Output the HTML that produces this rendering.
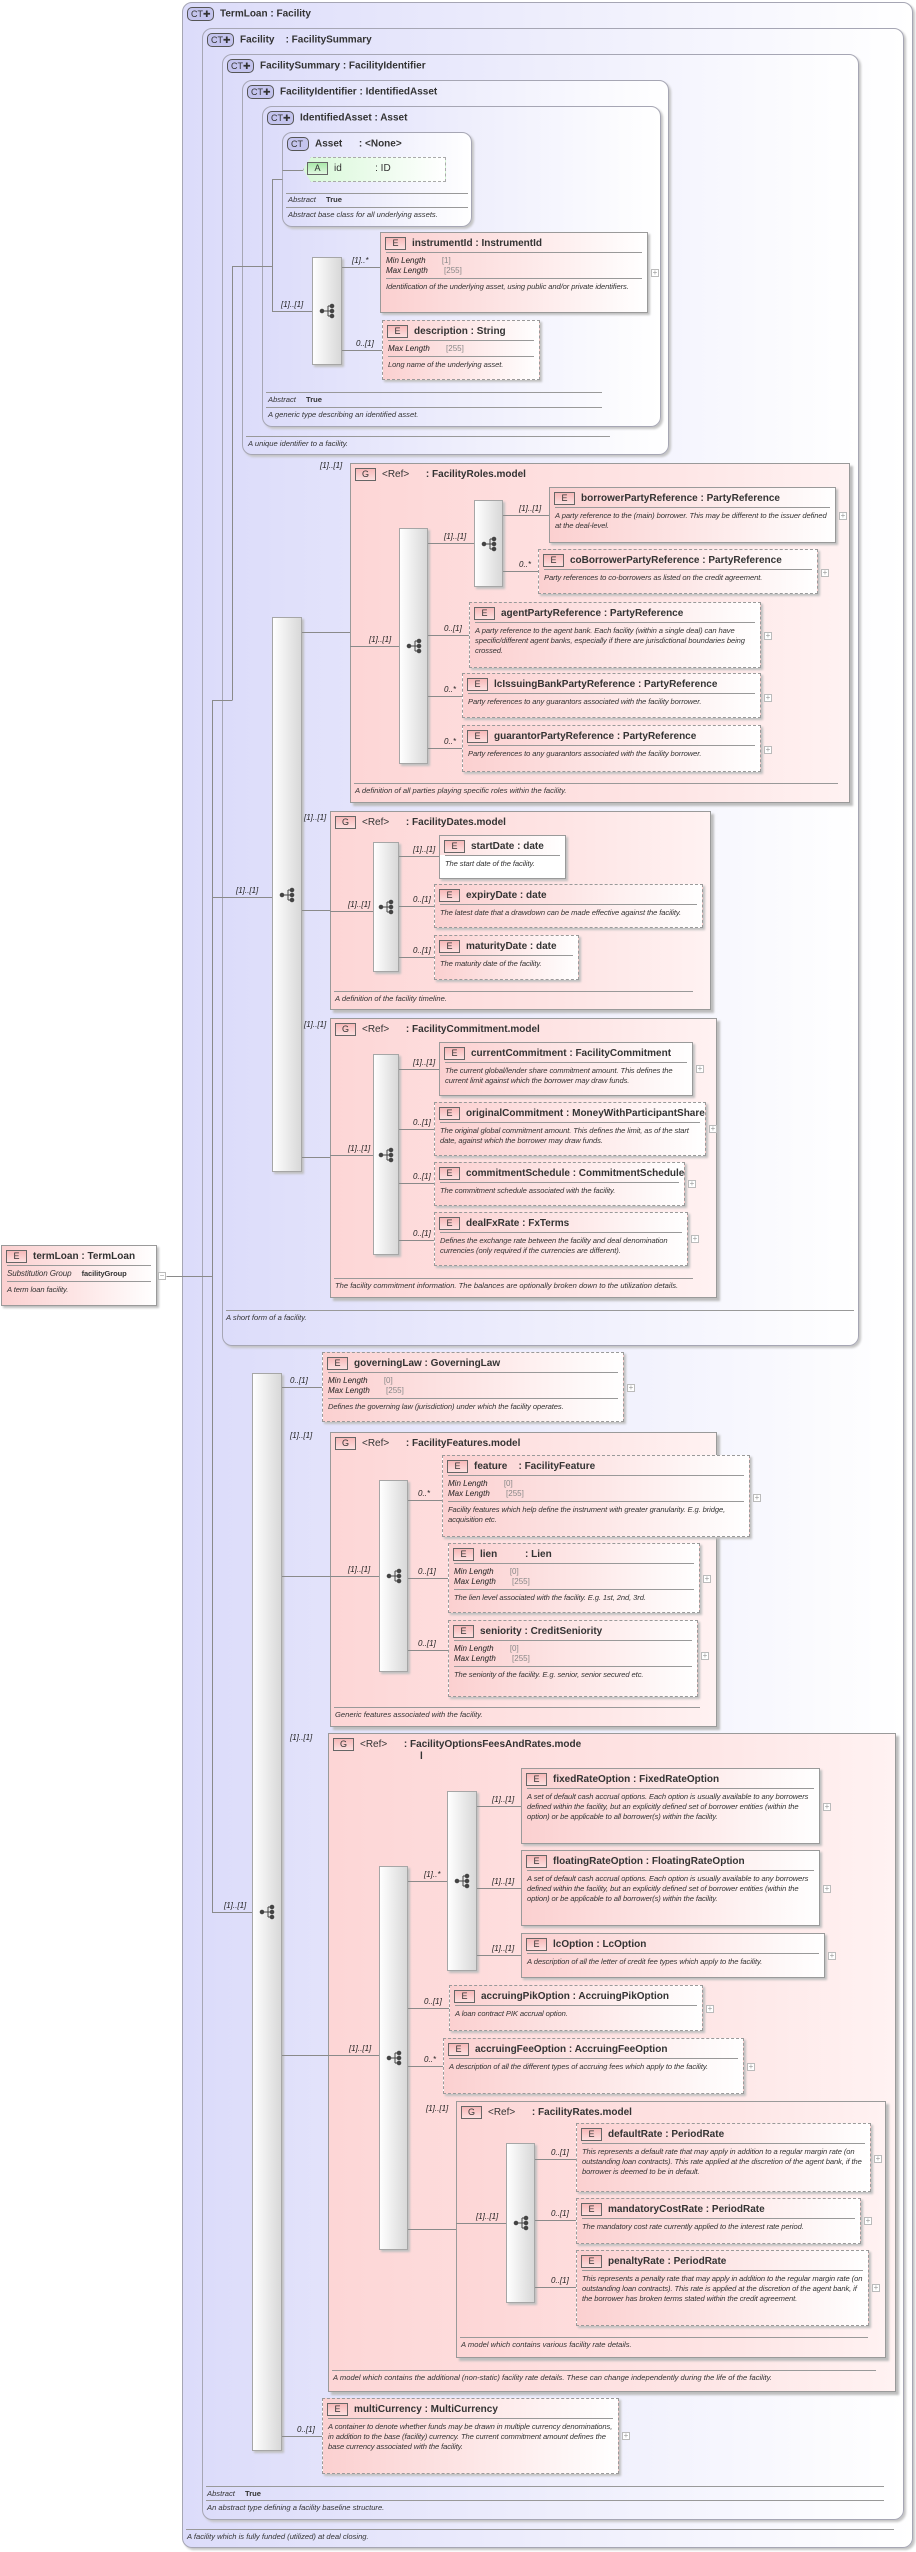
<!DOCTYPE html>
<html><head><meta charset="utf-8">
<style>
*{box-sizing:border-box;margin:0;padding:0}
body{width:916px;height:2552px;background:#fff;position:relative;font-family:"Liberation Sans",sans-serif;color:#222;overflow:hidden}
.a{position:absolute}
.f{position:absolute;border:1px solid #a6a6b4;border-radius:10px;background:linear-gradient(to right,#dcdcfa 0%,#ececfc 45%,#ffffff 100%);box-shadow:2px 2px 2px #c4c4c4}
.ft{position:absolute;font-size:10px;font-weight:bold;color:#333;white-space:pre}
.ct{display:inline-block;width:27px;height:14px;border:1px solid #555;border-radius:5px;background:#c4c4ee;font-size:9px;font-weight:normal;line-height:12px;padding-left:3px;vertical-align:middle;margin-right:6px;color:#333}
.e{position:absolute;border:1px solid #9a9a9a;background:linear-gradient(to right,#fbd0d0 0%,#fde6e6 50%,#fff 100%);box-shadow:2px 2px 2px #c0c0c0;font-size:8px}
.o{border-style:dashed}
.g{position:absolute;border:1px solid #9a9a9a;background:linear-gradient(to right,#fdd6d6 0%,#fee4e4 60%,#fff2f2 100%);box-shadow:3px 3px 2px #bdbdbd}
.h{font-size:10px;font-weight:bold;color:#333;padding:4px 4px 3px 4px;white-space:pre;height:19px}
.b{display:inline-block;width:21px;height:13px;border:1px solid #666;background:linear-gradient(#f7b8b8,#fde0e0);font-size:9px;font-weight:normal;text-align:center;line-height:11px;margin-right:6px;vertical-align:middle}
.p{margin:0 5px;border-top:1px solid #999;padding:3px 0 2px;font-size:8px;line-height:10px;font-style:italic}
.p b{font-style:normal;font-weight:normal;color:#888;margin-left:14px}
.d{margin:0 5px;border-top:1px solid #999;padding:3px 0 2px;font-size:7.6px;letter-spacing:-0.1px;line-height:10px;font-style:italic;color:#333}
.s{position:absolute;border:1px solid #a6a6a6;background:linear-gradient(to right,#fff,#d8d8d8);box-shadow:2px 2px 2px #c0c0c0}
.s svg{position:absolute;left:50%;top:50%;margin:-8px 0 0 -8px}
.c{position:absolute;font-size:8px;font-style:italic;color:#222;white-space:nowrap;text-align:right}
.pl{position:absolute;width:8px;height:8px;border:1px solid #bbb;background:#fff;font-size:8px;line-height:6px;text-align:center;color:#999}
.fl{position:absolute;border-top:1px solid #999}
.fx{position:absolute;font-size:7.6px;font-style:italic;color:#333;white-space:nowrap}
</style></head><body>

<!-- frames -->
<div class="f" style="left:182px;top:2px;width:731px;height:2546px"></div>
<div class="ft" style="left:187px;top:7px"><span class="ct">CT✚</span>TermLoan : Facility</div>
<div class="f" style="left:202px;top:28px;width:702px;height:2492px"></div>
<div class="ft" style="left:207px;top:33px"><span class="ct">CT✚</span>Facility    : FacilitySummary</div>
<div class="f" style="left:222px;top:54px;width:637px;height:1292px"></div>
<div class="ft" style="left:227px;top:59px"><span class="ct">CT✚</span>FacilitySummary : FacilityIdentifier</div>
<div class="f" style="left:242px;top:80px;width:427px;height:375px"></div>
<div class="ft" style="left:247px;top:85px"><span class="ct">CT✚</span>FacilityIdentifier : IdentifiedAsset</div>
<div class="f" style="left:262px;top:106px;width:399px;height:321px"></div>
<div class="ft" style="left:267px;top:111px"><span class="ct">CT✚</span>IdentifiedAsset : Asset</div>
<div class="f" style="left:282px;top:132px;width:190px;height:95px"></div>
<div class="ft" style="left:287px;top:137px"><span class="ct" style="width:22px">CT</span>Asset      : &lt;None&gt;</div>

<div class="a" style="left:303px;top:157px;width:143px;height:25px;border:1px dashed #aaa;background:linear-gradient(to right,#d8f8d8,#fff);clip-path:polygon(8px 0,100% 0,100% 100%,8px 100%,0 50%)"></div>
<div class="ft" style="left:307px;top:162px;font-weight:normal;font-size:10px"><span class="b" style="background:linear-gradient(#a8e8a8,#e0f8e0)">A</span>id            : ID</div>
<div class="fl" style="left:286px;top:193px;width:182px"></div>
<div class="fx" style="left:288px;top:195px">Abstract <b style="font-style:normal;margin-left:8px">True</b></div>
<div class="fl" style="left:286px;top:207px;width:182px"></div>
<div class="fx" style="left:288px;top:210px">Abstract base class for all underlying assets.</div>

<div class="s" style="left:312px;top:257px;width:30px;height:108px"><svg width="16" height="16"><g fill="#444" stroke="#444"><circle cx="3" cy="8" r="1.8"/><line x1="3" y1="8" x2="9" y2="8"/><line x1="9" y1="3" x2="9" y2="13"/><line x1="9" y1="3" x2="13" y2="3"/><line x1="9" y1="8" x2="13" y2="8"/><line x1="9" y1="13" x2="13" y2="13"/><circle cx="13" cy="3" r="1.8"/><circle cx="13" cy="8" r="1.8"/><circle cx="13" cy="13" r="1.8"/></g></svg></div>
<div class="e" style="left:380px;top:232px;width:268px;height:81px"><div class="h"><span class="b">E</span>instrumentId : InstrumentId</div><div class="p">Min Length <b>[1]</b><br>Max Length <b>[255]</b></div><div class="d">Identification of the underlying asset, using public and/or private identifiers.</div></div>
<div class="pl" style="left:651px;top:269px">+</div>
<div class="e o" style="left:382px;top:320px;width:158px;height:60px"><div class="h"><span class="b">E</span>description : String</div><div class="p">Max Length <b>[255]</b></div><div class="d">Long name of the underlying asset.</div></div>

<div class="fl" style="left:266px;top:392px;width:336px"></div>
<div class="fx" style="left:268px;top:395px">Abstract <b style="font-style:normal;margin-left:8px">True</b></div>
<div class="fl" style="left:266px;top:407px;width:336px"></div>
<div class="fx" style="left:268px;top:410px">A generic type describing an identified asset.</div>
<div class="fl" style="left:246px;top:436px;width:364px"></div>
<div class="fx" style="left:248px;top:439px">A unique identifier to a facility.</div>

<!-- bar1 -->
<div class="s" style="left:272px;top:617px;width:30px;height:555px"><svg width="16" height="16"><g fill="#444" stroke="#444"><circle cx="3" cy="8" r="1.8"/><line x1="3" y1="8" x2="9" y2="8"/><line x1="9" y1="3" x2="9" y2="13"/><line x1="9" y1="3" x2="13" y2="3"/><line x1="9" y1="8" x2="13" y2="8"/><line x1="9" y1="13" x2="13" y2="13"/><circle cx="13" cy="3" r="1.8"/><circle cx="13" cy="8" r="1.8"/><circle cx="13" cy="13" r="1.8"/></g></svg></div>

<!-- FacilityRoles -->
<div class="g" style="left:350px;top:463px;width:500px;height:340px"></div>
<div class="ft" style="left:355px;top:468px;font-weight:normal"><span class="b">G</span>&lt;Ref&gt;      <b>: FacilityRoles.model</b></div>
<div class="s" style="left:399px;top:528px;width:29px;height:236px"><svg width="16" height="16"><g fill="#444" stroke="#444"><circle cx="3" cy="8" r="1.8"/><line x1="3" y1="8" x2="9" y2="8"/><line x1="9" y1="3" x2="9" y2="13"/><line x1="9" y1="3" x2="13" y2="3"/><line x1="9" y1="8" x2="13" y2="8"/><line x1="9" y1="13" x2="13" y2="13"/><circle cx="13" cy="3" r="1.8"/><circle cx="13" cy="8" r="1.8"/><circle cx="13" cy="13" r="1.8"/></g></svg></div>
<div class="s" style="left:474px;top:500px;width:29px;height:87px"><svg width="16" height="16"><g fill="#444" stroke="#444"><circle cx="3" cy="8" r="1.8"/><line x1="3" y1="8" x2="9" y2="8"/><line x1="9" y1="3" x2="9" y2="13"/><line x1="9" y1="3" x2="13" y2="3"/><line x1="9" y1="8" x2="13" y2="8"/><line x1="9" y1="13" x2="13" y2="13"/><circle cx="13" cy="3" r="1.8"/><circle cx="13" cy="8" r="1.8"/><circle cx="13" cy="13" r="1.8"/></g></svg></div>
<div class="e" style="left:549px;top:487px;width:287px;height:56px"><div class="h"><span class="b">E</span>borrowerPartyReference : PartyReference</div><div class="d">A party reference to the (main) borrower. This may be different to the issuer defined at the deal-level.</div></div>
<div class="pl" style="left:839px;top:512px">+</div>
<div class="e o" style="left:538px;top:549px;width:280px;height:45px"><div class="h"><span class="b">E</span>coBorrowerPartyReference : PartyReference</div><div class="d">Party references to co-borrowers as listed on the credit agreement.</div></div>
<div class="pl" style="left:821px;top:569px">+</div>
<div class="e o" style="left:469px;top:602px;width:292px;height:66px"><div class="h"><span class="b">E</span>agentPartyReference : PartyReference</div><div class="d">A party reference to the agent bank. Each facility (within a single deal) can have specific/different agent banks, especially if there are jurisdictional boundaries being crossed.</div></div>
<div class="pl" style="left:764px;top:632px">+</div>
<div class="e o" style="left:462px;top:673px;width:299px;height:45px"><div class="h"><span class="b">E</span>lcIssuingBankPartyReference : PartyReference</div><div class="d">Party references to any guarantors associated with the facility borrower.</div></div>
<div class="pl" style="left:764px;top:694px">+</div>
<div class="e o" style="left:462px;top:725px;width:299px;height:47px"><div class="h"><span class="b">E</span>guarantorPartyReference : PartyReference</div><div class="d">Party references to any guarantors associated with the facility borrower.</div></div>
<div class="pl" style="left:764px;top:746px">+</div>
<div class="fl" style="left:354px;top:783px;width:484px"></div>
<div class="fx" style="left:355px;top:786px">A definition of all parties playing specific roles within the facility.</div>

<!-- FacilityDates -->
<div class="g" style="left:330px;top:811px;width:381px;height:199px"></div>
<div class="ft" style="left:335px;top:816px;font-weight:normal"><span class="b">G</span>&lt;Ref&gt;      <b>: FacilityDates.model</b></div>
<div class="s" style="left:373px;top:842px;width:26px;height:130px"><svg width="16" height="16"><g fill="#444" stroke="#444"><circle cx="3" cy="8" r="1.8"/><line x1="3" y1="8" x2="9" y2="8"/><line x1="9" y1="3" x2="9" y2="13"/><line x1="9" y1="3" x2="13" y2="3"/><line x1="9" y1="8" x2="13" y2="8"/><line x1="9" y1="13" x2="13" y2="13"/><circle cx="13" cy="3" r="1.8"/><circle cx="13" cy="8" r="1.8"/><circle cx="13" cy="13" r="1.8"/></g></svg></div>
<div class="e" style="left:439px;top:835px;width:127px;height:44px;background:#fff"><div class="h" style="background:linear-gradient(to right,#fde0e0,#fff)"><span class="b">E</span>startDate : date</div><div class="d">The start date of the facility.</div></div>
<div class="e o" style="left:434px;top:884px;width:269px;height:44px"><div class="h"><span class="b">E</span>expiryDate : date</div><div class="d" style="white-space:nowrap">The latest date that a drawdown can be made effective against the facility.</div></div>
<div class="e o" style="left:434px;top:935px;width:145px;height:45px"><div class="h"><span class="b">E</span>maturityDate : date</div><div class="d">The maturity date of the facility.</div></div>
<div class="fl" style="left:334px;top:991px;width:359px"></div>
<div class="fx" style="left:335px;top:994px">A definition of the facility timeline.</div>

<!-- FacilityCommitment -->
<div class="g" style="left:330px;top:1018px;width:387px;height:280px"></div>
<div class="ft" style="left:335px;top:1023px;font-weight:normal"><span class="b">G</span>&lt;Ref&gt;      <b>: FacilityCommitment.model</b></div>
<div class="s" style="left:373px;top:1054px;width:26px;height:201px"><svg width="16" height="16"><g fill="#444" stroke="#444"><circle cx="3" cy="8" r="1.8"/><line x1="3" y1="8" x2="9" y2="8"/><line x1="9" y1="3" x2="9" y2="13"/><line x1="9" y1="3" x2="13" y2="3"/><line x1="9" y1="8" x2="13" y2="8"/><line x1="9" y1="13" x2="13" y2="13"/><circle cx="13" cy="3" r="1.8"/><circle cx="13" cy="8" r="1.8"/><circle cx="13" cy="13" r="1.8"/></g></svg></div>
<div class="e" style="left:439px;top:1042px;width:254px;height:54px"><div class="h"><span class="b">E</span>currentCommitment : FacilityCommitment</div><div class="d">The current global/lender share commitment amount. This defines the current limit against which the borrower may draw funds.</div></div>
<div class="pl" style="left:696px;top:1065px">+</div>
<div class="e o" style="left:434px;top:1102px;width:272px;height:54px"><div class="h"><span class="b">E</span>originalCommitment : MoneyWithParticipantShare</div><div class="d">The original global commitment amount. This defines the limit, as of the start date, against which the borrower may draw funds.</div></div>
<div class="pl" style="left:709px;top:1125px">+</div>
<div class="e o" style="left:434px;top:1162px;width:251px;height:44px"><div class="h"><span class="b">E</span>commitmentSchedule : CommitmentSchedule</div><div class="d">The commitment schedule associated with the facility.</div></div>
<div class="pl" style="left:688px;top:1180px">+</div>
<div class="e o" style="left:434px;top:1212px;width:254px;height:54px"><div class="h"><span class="b">E</span>dealFxRate : FxTerms</div><div class="d">Defines the exchange rate between the facility and deal denomination currencies (only required if the currencies are different).</div></div>
<div class="pl" style="left:691px;top:1235px">+</div>
<div class="fl" style="left:334px;top:1278px;width:359px"></div>
<div class="fx" style="left:335px;top:1281px">The facility commitment information. The balances are optionally broken down to the utilization details.</div>

<div class="fl" style="left:226px;top:1310px;width:628px"></div>
<div class="fx" style="left:226px;top:1313px">A short form of a facility.</div>

<!-- bar2 -->
<div class="s" style="left:252px;top:1373px;width:30px;height:1078px"><svg width="16" height="16"><g fill="#444" stroke="#444"><circle cx="3" cy="8" r="1.8"/><line x1="3" y1="8" x2="9" y2="8"/><line x1="9" y1="3" x2="9" y2="13"/><line x1="9" y1="3" x2="13" y2="3"/><line x1="9" y1="8" x2="13" y2="8"/><line x1="9" y1="13" x2="13" y2="13"/><circle cx="13" cy="3" r="1.8"/><circle cx="13" cy="8" r="1.8"/><circle cx="13" cy="13" r="1.8"/></g></svg></div>

<div class="e o" style="left:322px;top:1352px;width:302px;height:70px"><div class="h"><span class="b">E</span>governingLaw : GoverningLaw</div><div class="p">Min Length <b>[0]</b><br>Max Length <b>[255]</b></div><div class="d">Defines the governing law (jurisdiction) under which the facility operates.</div></div>
<div class="pl" style="left:627px;top:1384px">+</div>

<!-- FacilityFeatures -->
<div class="g" style="left:330px;top:1432px;width:387px;height:295px"></div>
<div class="ft" style="left:335px;top:1437px;font-weight:normal"><span class="b">G</span>&lt;Ref&gt;      <b>: FacilityFeatures.model</b></div>
<div class="s" style="left:379px;top:1480px;width:29px;height:192px"><svg width="16" height="16"><g fill="#444" stroke="#444"><circle cx="3" cy="8" r="1.8"/><line x1="3" y1="8" x2="9" y2="8"/><line x1="9" y1="3" x2="9" y2="13"/><line x1="9" y1="3" x2="13" y2="3"/><line x1="9" y1="8" x2="13" y2="8"/><line x1="9" y1="13" x2="13" y2="13"/><circle cx="13" cy="3" r="1.8"/><circle cx="13" cy="8" r="1.8"/><circle cx="13" cy="13" r="1.8"/></g></svg></div>
<div class="e o" style="left:442px;top:1455px;width:308px;height:82px"><div class="h"><span class="b">E</span>feature    : FacilityFeature</div><div class="p">Min Length <b>[0]</b><br>Max Length <b>[255]</b></div><div class="d">Facility features which help define the instrument with greater granularity. E.g. bridge, acquisition etc.</div></div>
<div class="pl" style="left:753px;top:1494px">+</div>
<div class="e o" style="left:448px;top:1543px;width:252px;height:70px"><div class="h"><span class="b">E</span>lien          : Lien</div><div class="p">Min Length <b>[0]</b><br>Max Length <b>[255]</b></div><div class="d">The lien level associated with the facility. E.g. 1st, 2nd, 3rd.</div></div>
<div class="pl" style="left:703px;top:1575px">+</div>
<div class="e o" style="left:448px;top:1620px;width:250px;height:77px"><div class="h"><span class="b">E</span>seniority : CreditSeniority</div><div class="p">Min Length <b>[0]</b><br>Max Length <b>[255]</b></div><div class="d">The seniority of the facility. E.g. senior, senior secured etc.</div></div>
<div class="pl" style="left:701px;top:1652px">+</div>
<div class="fl" style="left:334px;top:1707px;width:366px"></div>
<div class="fx" style="left:335px;top:1710px">Generic features associated with the facility.</div>

<!-- FOFR -->
<div class="g" style="left:328px;top:1733px;width:568px;height:659px"></div>
<div class="ft" style="left:333px;top:1738px;font-weight:normal"><span class="b">G</span>&lt;Ref&gt;      <b>: FacilityOptionsFeesAndRates.mode</b></div>
<div class="ft" style="left:420px;top:1751px">l</div>
<div class="s" style="left:379px;top:1866px;width:29px;height:384px"><svg width="16" height="16"><g fill="#444" stroke="#444"><circle cx="3" cy="8" r="1.8"/><line x1="3" y1="8" x2="9" y2="8"/><line x1="9" y1="3" x2="9" y2="13"/><line x1="9" y1="3" x2="13" y2="3"/><line x1="9" y1="8" x2="13" y2="8"/><line x1="9" y1="13" x2="13" y2="13"/><circle cx="13" cy="3" r="1.8"/><circle cx="13" cy="8" r="1.8"/><circle cx="13" cy="13" r="1.8"/></g></svg></div>
<div class="s" style="left:447px;top:1791px;width:30px;height:180px"><svg width="16" height="16"><g fill="#444" stroke="#444"><circle cx="3" cy="8" r="1.8"/><line x1="3" y1="8" x2="9" y2="8"/><line x1="9" y1="3" x2="9" y2="13"/><line x1="9" y1="3" x2="13" y2="3"/><line x1="9" y1="8" x2="13" y2="8"/><line x1="9" y1="13" x2="13" y2="13"/><circle cx="13" cy="3" r="1.8"/><circle cx="13" cy="8" r="1.8"/><circle cx="13" cy="13" r="1.8"/></g></svg></div>
<div class="e" style="left:521px;top:1768px;width:299px;height:76px"><div class="h"><span class="b">E</span>fixedRateOption : FixedRateOption</div><div class="d">A set of default cash accrual options. Each option is usually available to any borrowers defined within the facility, but an explicitly defined set of borrower entities (within the option) or be applicable to all borrower(s) within the facility.</div></div>
<div class="pl" style="left:823px;top:1803px">+</div>
<div class="e" style="left:521px;top:1850px;width:299px;height:76px"><div class="h"><span class="b">E</span>floatingRateOption : FloatingRateOption</div><div class="d">A set of default cash accrual options. Each option is usually available to any borrowers defined within the facility, but an explicitly defined set of borrower entities (within the option) or be applicable to all borrower(s) within the facility.</div></div>
<div class="pl" style="left:823px;top:1885px">+</div>
<div class="e" style="left:521px;top:1933px;width:304px;height:45px"><div class="h"><span class="b">E</span>lcOption : LcOption</div><div class="d">A description of all the letter of credit fee types which apply to the facility.</div></div>
<div class="pl" style="left:828px;top:1952px">+</div>
<div class="e o" style="left:449px;top:1985px;width:254px;height:46px"><div class="h"><span class="b">E</span>accruingPikOption : AccruingPikOption</div><div class="d">A loan contract PIK accrual option.</div></div>
<div class="pl" style="left:706px;top:2005px">+</div>
<div class="e o" style="left:443px;top:2038px;width:301px;height:56px"><div class="h"><span class="b">E</span>accruingFeeOption : AccruingFeeOption</div><div class="d">A description of all the different types of accruing fees which apply to the facility.</div></div>
<div class="pl" style="left:747px;top:2063px">+</div>

<!-- FacilityRates -->
<div class="g" style="left:456px;top:2101px;width:430px;height:257px"></div>
<div class="ft" style="left:461px;top:2106px;font-weight:normal"><span class="b">G</span>&lt;Ref&gt;      <b>: FacilityRates.model</b></div>
<div class="s" style="left:506px;top:2143px;width:29px;height:160px"><svg width="16" height="16"><g fill="#444" stroke="#444"><circle cx="3" cy="8" r="1.8"/><line x1="3" y1="8" x2="9" y2="8"/><line x1="9" y1="3" x2="9" y2="13"/><line x1="9" y1="3" x2="13" y2="3"/><line x1="9" y1="8" x2="13" y2="8"/><line x1="9" y1="13" x2="13" y2="13"/><circle cx="13" cy="3" r="1.8"/><circle cx="13" cy="8" r="1.8"/><circle cx="13" cy="13" r="1.8"/></g></svg></div>
<div class="e o" style="left:576px;top:2123px;width:295px;height:69px"><div class="h"><span class="b">E</span>defaultRate : PeriodRate</div><div class="d">This represents a default rate that may apply in addition to a regular margin rate (on outstanding loan contracts). This rate applied at the discretion of the agent bank, if the borrower is deemed to be in default.</div></div>
<div class="pl" style="left:874px;top:2155px">+</div>
<div class="e o" style="left:576px;top:2198px;width:285px;height:46px"><div class="h"><span class="b">E</span>mandatoryCostRate : PeriodRate</div><div class="d">The mandatory cost rate currently applied to the interest rate period.</div></div>
<div class="pl" style="left:864px;top:2217px">+</div>
<div class="e o" style="left:576px;top:2250px;width:293px;height:76px"><div class="h"><span class="b">E</span>penaltyRate : PeriodRate</div><div class="d">This represents a penalty rate that may apply in addition to the regular margin rate (on outstanding loan contracts). This rate is applied at the discretion of the agent bank, if the borrower has broken terms stated within the credit agreement.</div></div>
<div class="pl" style="left:872px;top:2284px">+</div>
<div class="fl" style="left:460px;top:2337px;width:408px"></div>
<div class="fx" style="left:461px;top:2340px">A model which contains various facility rate details.</div>
<div class="fl" style="left:332px;top:2370px;width:544px"></div>
<div class="fx" style="left:333px;top:2373px">A model which contains the additional (non-static) facility rate details. These can change independently during the life of the facility.</div>

<div class="e o" style="left:322px;top:2398px;width:297px;height:76px"><div class="h"><span class="b">E</span>multiCurrency : MultiCurrency</div><div class="d">A container to denote whether funds may be drawn in multiple currency denominations, in addition to the base (facility) currency. The current commitment amount defines the base currency associated with the facility.</div></div>
<div class="pl" style="left:622px;top:2432px">+</div>

<div class="fl" style="left:206px;top:2486px;width:678px"></div>
<div class="fx" style="left:207px;top:2489px">Abstract <b style="font-style:normal;margin-left:8px">True</b></div>
<div class="fl" style="left:206px;top:2500px;width:678px"></div>
<div class="fx" style="left:207px;top:2503px">An abstract type defining a facility baseline structure.</div>
<div class="fl" style="left:186px;top:2529px;width:708px"></div>
<div class="fx" style="left:187px;top:2532px">A facility which is fully funded (utilized) at deal closing.</div>

<!-- termLoan -->
<div class="e" style="left:1px;top:1245px;width:156px;height:61px"><div class="h"><span class="b">E</span>termLoan : TermLoan</div><div class="d" style="font-size:8px">Substitution Group <span style="font-style:normal;font-weight:bold;margin-left:8px;font-size:7.5px">facilityGroup</span></div><div class="d">A term loan facility.</div></div>
<div class="pl" style="left:158px;top:1272px">−</div>

<!-- connector lines -->
<svg class="a" style="left:0;top:0" width="916" height="2552"><g stroke="#8a8a8a" stroke-width="1" fill="none" shape-rendering="crispEdges">
<path d="M166.5 1276.5H212.5M212.5 700V1913M212.5 700.5H232.5M232.5 266V700M232.5 266.5H272.5M272.5 179V312M272.5 179.5H282.5M282.5 170.5H303M272.5 311.5H312"/>
<path d="M342 267.5H380M342 350.5H382"/>
<path d="M212.5 897.5H272M302 632.5H350M302 910.5H330M302 1157.5H330"/>
<path d="M350 646.5H399M428 543.5H474M428 635.5H469M428 696.5H462M428 748.5H462M503 515.5H549M503 571.5H538"/>
<path d="M330 911.5H373M399 856.5H439M399 906.5H434M399 957.5H434"/>
<path d="M330 1155.5H373M399 1069.5H439M399 1129.5H434M399 1183.5H434M399 1240.5H434"/>
<path d="M212.5 1912.5H252M282 1387.5H322M282 1576.5H330M282 2055.5H328M282 2436.5H322"/>
<path d="M330 1576.5H379M408 1500.5H442M408 1578.5H448M408 1650.5H448"/>
<path d="M328 2055.5H379M408 1881.5H447M408 2008.5H449M408 2066.5H443M408 2229.5H456M477 1806.5H521M477 1888.5H521M477 1955.5H521"/>
<path d="M456 2223.5H506M535 2159.5H576M535 2220.5H576M535 2287.5H576"/>
</g></svg>

<!-- cardinalities -->
<div class="c" style="left:352px;top:256px">[1]..*</div>
<div class="c" style="left:356px;top:339px">0..[1]</div>
<div class="c" style="left:281px;top:300px">[1]..[1]</div>
<div class="c" style="left:320px;top:461px">[1]..[1]</div>
<div class="c" style="left:369px;top:635px">[1]..[1]</div>
<div class="c" style="left:444px;top:532px">[1]..[1]</div>
<div class="c" style="left:444px;top:624px">0..[1]</div>
<div class="c" style="left:444px;top:685px">0..*</div>
<div class="c" style="left:444px;top:737px">0..*</div>
<div class="c" style="left:519px;top:504px">[1]..[1]</div>
<div class="c" style="left:519px;top:560px">0..*</div>
<div class="c" style="left:236px;top:886px">[1]..[1]</div>
<div class="c" style="left:304px;top:813px">[1]..[1]</div>
<div class="c" style="left:348px;top:900px">[1]..[1]</div>
<div class="c" style="left:413px;top:845px">[1]..[1]</div>
<div class="c" style="left:413px;top:895px">0..[1]</div>
<div class="c" style="left:413px;top:946px">0..[1]</div>
<div class="c" style="left:304px;top:1020px">[1]..[1]</div>
<div class="c" style="left:348px;top:1144px">[1]..[1]</div>
<div class="c" style="left:413px;top:1058px">[1]..[1]</div>
<div class="c" style="left:413px;top:1118px">0..[1]</div>
<div class="c" style="left:413px;top:1172px">0..[1]</div>
<div class="c" style="left:413px;top:1229px">0..[1]</div>
<div class="c" style="left:224px;top:1901px">[1]..[1]</div>
<div class="c" style="left:290px;top:1376px">0..[1]</div>
<div class="c" style="left:290px;top:1431px">[1]..[1]</div>
<div class="c" style="left:348px;top:1565px">[1]..[1]</div>
<div class="c" style="left:418px;top:1489px">0..*</div>
<div class="c" style="left:418px;top:1567px">0..[1]</div>
<div class="c" style="left:418px;top:1639px">0..[1]</div>
<div class="c" style="left:290px;top:1733px">[1]..[1]</div>
<div class="c" style="left:349px;top:2044px">[1]..[1]</div>
<div class="c" style="left:424px;top:1870px">[1]..*</div>
<div class="c" style="left:424px;top:1997px">0..[1]</div>
<div class="c" style="left:424px;top:2055px">0..*</div>
<div class="c" style="left:426px;top:2104px">[1]..[1]</div>
<div class="c" style="left:492px;top:1795px">[1]..[1]</div>
<div class="c" style="left:492px;top:1877px">[1]..[1]</div>
<div class="c" style="left:492px;top:1944px">[1]..[1]</div>
<div class="c" style="left:476px;top:2212px">[1]..[1]</div>
<div class="c" style="left:551px;top:2148px">0..[1]</div>
<div class="c" style="left:551px;top:2209px">0..[1]</div>
<div class="c" style="left:551px;top:2276px">0..[1]</div>
<div class="c" style="left:297px;top:2425px">0..[1]</div>
</body></html>
